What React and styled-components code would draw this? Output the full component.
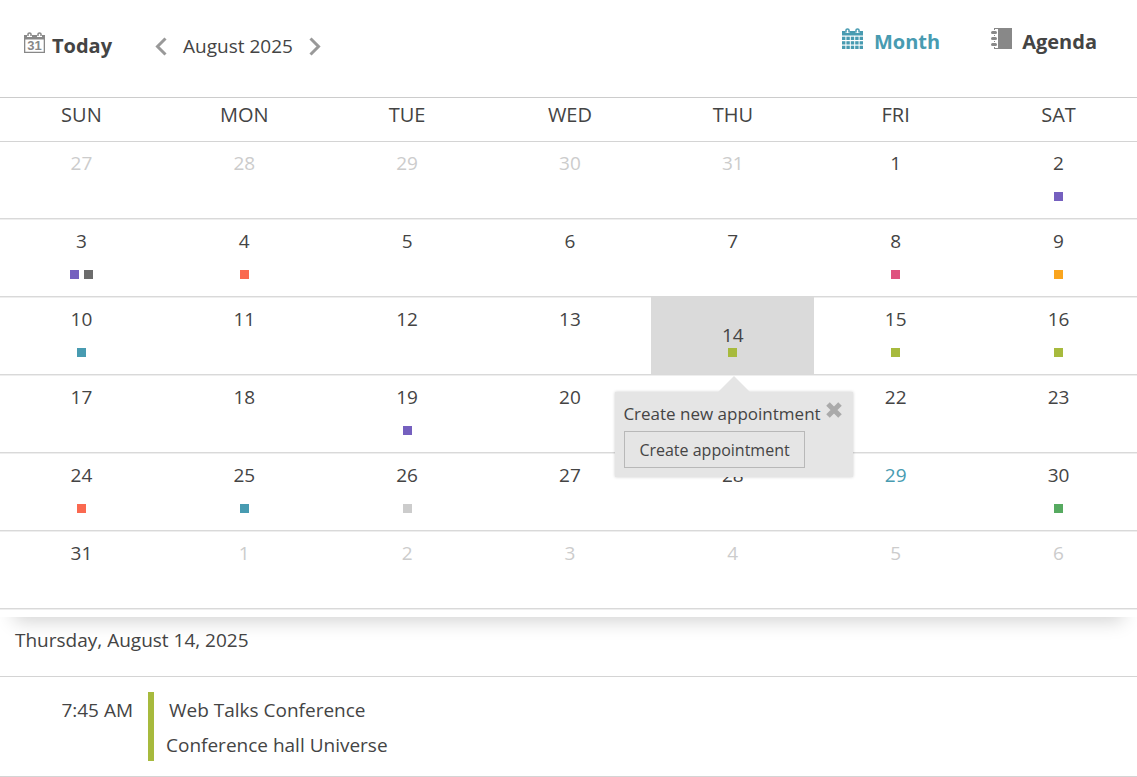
import { useState } from 'react'
import styled, { createGlobalStyle } from 'styled-components'

const GlobalStyle = createGlobalStyle`
  * {
    box-sizing: border-box;
  }

  body {
    margin: 0;
    overflow-x: hidden;
    background: #fff;
    color: #444;
    font-family: 'Open Sans', 'Noto Sans', sans-serif;
    font-size: 19px;
    line-height: 24px;
  }

  button {
    margin: 0;
    padding: 0;
    border: 0;
    background: none;
    color: inherit;
    font: inherit;
    cursor: pointer;
  }
`

const Page = styled.main`
  overflow: hidden;
`

const Toolbar = styled.header`
  display: flex;
  justify-content: space-between;
  align-items: flex-start;
  height: 97px;
  padding: 28px 40px 0 24px;
`

const Group = styled.div`
  display: flex;
  align-items: center;
  gap: ${p => p.gap};
  padding-top: ${p => p.drop || 0};
`

const ToolButton = styled.button`
  display: flex;
  align-items: flex-start;
  gap: ${p => p.gap};
  color: ${p => p.$active ? '#489bb1' : '#444'};
  font-size: 20px;
  line-height: 28px;
  font-weight: 700;

  svg {
    color: ${p => p.$active ? '#489bb1' : '#888'};
  }
`

const Pager = styled.div`
  display: flex;
  align-items: center;
  gap: 16px;
`

const PagerButton = styled.button`
  display: flex;
  color: #999;
`

const MonthPanel = styled.section`
  position: relative;
  z-index: 1;
  padding-bottom: 7px;
  background: #fff;
  box-shadow: 0 18px 18px -14px rgba(0, 0, 0, .18);
`

const Grid = styled.table`
  width: calc(100% + 3px);
  border-collapse: separate;
  border-spacing: 0;
  table-layout: fixed;
  border-top: 1px solid #ccc;
`

const Weekday = styled.th`
  height: 44px;
  padding: 0 0 9px;
  border-bottom: 1px solid #d4d4d4;
  font-size: 20px;
  font-weight: 400;
`

const Cell = styled.td`
  position: relative;
  height: 78px;
  padding: 0;
  vertical-align: top;
  box-shadow: inset 0 -1px #eee, inset 0 -2px #d9d9d9;
`

const Day = styled.button`
  display: flex;
  flex-direction: column;
  align-items: center;
  gap: ${p => p.$selected ? '1px' : '17px'};
  width: 100%;
  height: 76px;
  padding-top: ${p => p.$selected ? '25px' : '9px'};
  background: ${p => p.$selected ? '#dadada' : 'transparent'};
  box-shadow: ${p => p.$selected ? '0 -1px #dadada' : 'none'};
  color: ${p => p.$muted ? '#ccc' : p.$today ? '#489bb1' : '#444'};
`

const Markers = styled.span`
  display: flex;
  gap: 5px;
`

const Marker = styled.span`
  width: 9px;
  height: 9px;
  background: ${p => p.color};
`

const Popup = styled.div`
  position: absolute;
  z-index: 2;
  top: 94px;
  left: -36px;
  display: flex;
  flex-direction: column;
  align-items: flex-start;
  gap: 5px;
  padding: 10px 32px 9px 8px;
  background: #e5e5e5;
  box-shadow: 0 0 3px rgba(0, 0, 0, .2);
  font-size: 17px;
  white-space: nowrap;

  &::before {
    content: '';
    position: absolute;
    bottom: 100%;
    left: 50%;
    margin-left: -16px;
    border: 16px solid transparent;
    border-top-width: 0;
    border-bottom-color: #e5e5e5;
  }
`

const CloseButton = styled.button`
  position: absolute;
  top: 10px;
  right: 11px;
  display: flex;
  color: #aaa;
`

const CreateButton = styled.button`
  height: 37px;
  margin-left: 1px;
  padding: 0 14px;
  border: 1px solid #b8b8b8;
  font-size: 16px;
`

const Schedule = styled.section`
  border-bottom: 1px solid #d4d4d4;
`

const ScheduleDate = styled.h2`
  height: 60px;
  margin: 0;
  padding: 11px 15px;
  border-bottom: 1px solid #d4d4d4;
  font-size: 19px;
  font-weight: 400;
`

const Appointment = styled.article`
  display: flex;
  padding: 15px 0;
`

const Time = styled.time`
  width: 148px;
  padding: 6px 15px 0 0;
  text-align: right;
`

const Details = styled.div`
  display: flex;
  flex-direction: column;
  gap: 11px;
  padding: 6px 12px 4px;
  border-left: 6px solid #a7ba3d;
`

const Title = styled.div`
  padding-left: 3px;
`

const TodayIcon = () => (
  <svg width="21" height="21" viewBox="0 0 21 21" aria-hidden="true">
    <path d="M0 3h3v2h5V3h5v2h5V3h3v18H0zM1.300 7.500v12.200h18.400V7.500z" fill="currentColor" fillRule="evenodd" />
    <path d="M4 4V2q0-1 1.500-1T7 2v2M14 4V2q0-1 1.500-1T17 2v2" fill="none" stroke="currentColor" strokeWidth="1.500" />
    <text x="10.500" y="18" textAnchor="middle" fontFamily="Liberation Sans" fontSize="13" fontWeight="700" fill="currentColor">31</text>
  </svg>
)

const columns = [0, 4.400, 8.800, 13.200, 17.600]

const MonthIcon = () => (
  <svg width="21" height="21" viewBox="0 0 21 21" fill="currentColor" aria-hidden="true">
    <path d="M0 3h3.500v2h4V3h6v2h4V3H21v4.500H0z" />
    <path d="M4 4.500V2q0-1 1.500-1T7 2v2.500M14 4.500V2q0-1 1.500-1T17 2v2.500" fill="none" stroke="currentColor" strokeWidth="1.500" />
    {[8.700, 13.200, 17.700].map(y => columns.map(x => (
      <rect key={`${x}-${y}`} x={x} y={y} width="3.400" height="3.300" />
    )))}
  </svg>
)

const AgendaIcon = () => (
  <svg width="21" height="21" viewBox="0 0 21 21" fill="currentColor" aria-hidden="true">
    <path d="M3 0h18v21H3v-2h1v1h3V1H4v1H3zM3 7h1v1H3zM3 13h1v1H3z" />
    <rect x="0" y="3" width="6" height="3" rx="1.500" />
    <rect x="0" y="9" width="6" height="3" rx="1.500" />
    <rect x="0" y="15" width="6" height="3" rx="1.500" />
  </svg>
)

const Chevron = ({ d }) => (
  <svg width="12" height="19" viewBox="0 0 12 19" fill="none" stroke="currentColor" strokeWidth="3" aria-hidden="true">
    <path d={d} />
  </svg>
)

const CloseIcon = () => (
  <svg width="16" height="16" viewBox="0 0 16 16" stroke="currentColor" strokeWidth="5" aria-hidden="true">
    <path d="M2 2l12 12M14 2L2 14" />
  </svg>
)

const weekdays = ['SUN', 'MON', 'TUE', 'WED', 'THU', 'FRI', 'SAT']

const purple = '#7560bf'
const gray = '#6c6c6c'
const orange = '#fa6950'
const green = '#a7ba3d'
const teal = '#489bb1'

const appointments = {
  2: [purple],
  3: [purple, gray],
  4: [orange],
  8: ['#df527f'],
  9: ['#faa51e'],
  10: [teal],
  14: [green],
  15: [green],
  16: [green],
  19: [purple],
  24: [orange],
  25: [teal],
  26: ['#ccc'],
  30: ['#56aa60']
}

const weeks = Array.from({ length: 6 }, (_, week) =>
  Array.from({ length: 7 }, (_, day) => {
    const date = new Date(2025, 6, 27 + week * 7 + day)
    return { number: date.getDate(), inMonth: date.getMonth() === 7 }
  })
)

function CreatePopup({ onClose }) {
  return <Popup role="dialog" aria-label="Create new appointment">
    <span>Create new appointment</span>
    <CreateButton>Create appointment</CreateButton>
    <CloseButton aria-label="Close" onClick={onClose}><CloseIcon /></CloseButton>
  </Popup>
}

function App() {
  const [selected, setSelected] = useState(14)
  const [open, setOpen] = useState(true)

  const select = number => {
    setSelected(number)
    setOpen(true)
  }

  return <Page>
    <GlobalStyle />
    <Toolbar>
      <Group gap="43px" drop="4px">
        <ToolButton gap="7px"><TodayIcon />Today</ToolButton>
        <Pager>
          <PagerButton aria-label="Previous month"><Chevron d="M10.500 1.500L2.500 9.500l8 8" /></PagerButton>
          <span>August 2025</span>
          <PagerButton aria-label="Next month"><Chevron d="M1.500 1.500l8 8-8 8" /></PagerButton>
        </Pager>
      </Group>
      <Group gap="51px">
        <ToolButton $active gap="11px"><MonthIcon />Month</ToolButton>
        <ToolButton gap="10px"><AgendaIcon />Agenda</ToolButton>
      </Group>
    </Toolbar>
    <MonthPanel>
      <Grid>
        <thead>
          <tr>{weekdays.map(day => <Weekday key={day} scope="col">{day}</Weekday>)}</tr>
        </thead>
        <tbody>
          {weeks.map((week, i) => <tr key={i}>
            {week.map(({ number, inMonth }) => {
              const isSelected = inMonth && number === selected
              return <Cell key={number}>
                <Day
                  $muted={!inMonth}
                  $today={inMonth && number === 29}
                  $selected={isSelected}
                  onClick={() => inMonth && select(number)}
                >
                  {number}
                  <Markers>
                    {inMonth && (appointments[number] || []).map(color => <Marker key={color} color={color} />)}
                  </Markers>
                </Day>
                {isSelected && open && <CreatePopup onClose={() => setOpen(false)} />}
              </Cell>
            })}
          </tr>)}
        </tbody>
      </Grid>
    </MonthPanel>
    <Schedule>
      <ScheduleDate>Thursday, August 14, 2025</ScheduleDate>
      <Appointment>
        <Time>7:45 AM</Time>
        <Details>
          <Title>Web Talks Conference</Title>
          <div>Conference hall Universe</div>
        </Details>
      </Appointment>
    </Schedule>
  </Page>
}

export default App
